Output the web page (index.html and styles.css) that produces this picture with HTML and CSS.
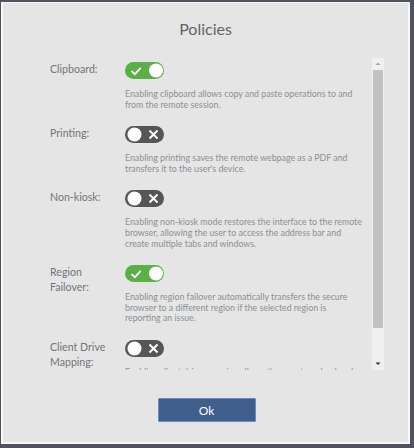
FILE: index.html
```html
<!DOCTYPE html>
<html>
<head>
<meta charset="utf-8">
<link rel="stylesheet" href="styles.css">
</head>
<body>
<div class="dialog">
  <div class="title">Policies</div>
  <div class="body">
    <div class="list">
      <div class="row">
        <div class="label">Clipboard:</div>
        <div class="content">
          <svg class="toggle" width="39" height="17" viewBox="0 0 39 17"><rect width="39" height="17" rx="8.5" fill="#5aaf46"/><path d="M6.5 9 L9.8 12.2 L15.8 5.8" fill="none" stroke="#fff" stroke-width="1.7"/><circle cx="31" cy="8.5" r="7" fill="#fff"/></svg>
          <p class="desc">Enabling clipboard allows copy and paste operations to and from the remote session.</p>
        </div>
      </div>
      <div class="row">
        <div class="label">Printing:</div>
        <div class="content">
          <svg class="toggle" width="39" height="17" viewBox="0 0 39 17"><rect width="39" height="17" rx="8.5" fill="#555657"/><circle cx="9.5" cy="8.5" r="7" fill="#fff"/><path d="M24.5 4.5 L32.5 12.5 M32.5 4.5 L24.5 12.5" stroke="#fff" stroke-width="2"/></svg>
          <p class="desc">Enabling printing saves the remote webpage as a PDF and transfers it to the user's device.</p>
        </div>
      </div>
      <div class="row">
        <div class="label">Non-kiosk:</div>
        <div class="content">
          <svg class="toggle" width="39" height="17" viewBox="0 0 39 17"><rect width="39" height="17" rx="8.5" fill="#555657"/><circle cx="9.5" cy="8.5" r="7" fill="#fff"/><path d="M24.5 4.5 L32.5 12.5 M32.5 4.5 L24.5 12.5" stroke="#fff" stroke-width="2"/></svg>
          <p class="desc">Enabling non-kiosk mode restores the interface to the remote browser, allowing the user to access the address bar and create multiple tabs and windows.</p>
        </div>
      </div>
      <div class="row">
        <div class="label">Region<br>Failover:</div>
        <div class="content">
          <svg class="toggle" width="39" height="17" viewBox="0 0 39 17"><rect width="39" height="17" rx="8.5" fill="#5aaf46"/><path d="M6.5 9 L9.8 12.2 L15.8 5.8" fill="none" stroke="#fff" stroke-width="1.7"/><circle cx="31" cy="8.5" r="7" fill="#fff"/></svg>
          <p class="desc">Enabling region failover automatically transfers the secure browser to a different region if the selected region is reporting an issue.</p>
        </div>
      </div>
      <div class="row">
        <div class="label">Client Drive<br>Mapping:</div>
        <div class="content">
          <svg class="toggle" width="39" height="17" viewBox="0 0 39 17"><rect width="39" height="17" rx="8.5" fill="#555657"/><circle cx="9.5" cy="8.5" r="7" fill="#fff"/><path d="M24.5 4.5 L32.5 12.5 M32.5 4.5 L24.5 12.5" stroke="#fff" stroke-width="2"/></svg>
          <p class="desc">Enabling client drive mapping allows the user to upload and download files between the local device and the remote browser.</p>
        </div>
      </div>
    </div>
    <div class="scrollbar">
      <div class="sb-btn"><svg width="12" height="12" viewBox="0 0 12 12"><path d="M3.5 7 L6 4.5 L8.5 7 Z" fill="#a3a3a3"/></svg></div>
      <div class="sb-thumb"></div>
      <div class="sb-rest"></div>
      <div class="sb-btn"><svg width="12" height="12" viewBox="0 0 12 12"><path d="M3.5 4.5 L8.5 4.5 L6 7 Z" fill="#2e2e2e"/></svg></div>
    </div>
  </div>
  <div class="footer">
    <button class="ok">Ok</button>
  </div>
</div>
</body>
</html>
```

FILE: styles.css
```css
html, body {
  margin: 0;
  padding: 0;
}
body {
  background: #50535e;
  width: 414px;
  height: 448px;
  overflow: hidden;
  font-family: Lato, "Open Sans", sans-serif;
}
.dialog {
  box-sizing: border-box;
  margin: 2px 0 0 1px;
  width: 409px;
  height: 442px;
  border: 2px solid #f7f7f7;
  border-top-width: 1px;
  background: #e4e5e4;
  display: flex;
  flex-direction: column;
}
.title {
  height: 55px;
  box-sizing: border-box;
  padding-top: 16px;
  text-align: center;
  font-size: 16px;
  color: #5f646e;
  line-height: 20px;
}
.body {
  height: 312px;
  display: flex;
  flex-direction: row;
}
.list {
  flex: 1;
  overflow: hidden;
  padding: 4px 0 0 47px;
}
.row {
  display: flex;
  flex-direction: row;
  padding-bottom: 16px;
}
.label {
  width: 75px;
  flex: none;
  font-size: 10.6px;
  line-height: 15px;
  color: #71757c;
}
.content {
  width: 237.5px;
  display: flex;
  flex-direction: column;
}
.toggle {
  display: block;
}
.desc {
  margin: 10px 0 0 0;
  font-size: 8.8px;
  line-height: 10.6px;
  color: #8b9098;
}
.scrollbar {
  width: 12px;
  flex: none;
  margin-right: 24px;
  background: #f0f0f0;
  display: flex;
  flex-direction: column;
}
.sb-btn {
  height: 12px;
  flex: none;
}
.sb-btn svg {
  display: block;
}
.sb-thumb {
  height: 258px;
  margin: 0 1px;
  background: #c1c1c1;
}
.sb-rest {
  flex: 1;
}
.footer {
  display: flex;
  justify-content: center;
  padding-top: 28px;
}
.ok {
  width: 98px;
  height: 24px;
  margin-left: 2px;
  background: #3e5e8b;
  border: 1px solid #6c8dc4;
  border-radius: 1px;
  color: #ffffff;
  font-family: Lato, "Open Sans", sans-serif;
  font-size: 12px;
  padding: 0;
}
```
